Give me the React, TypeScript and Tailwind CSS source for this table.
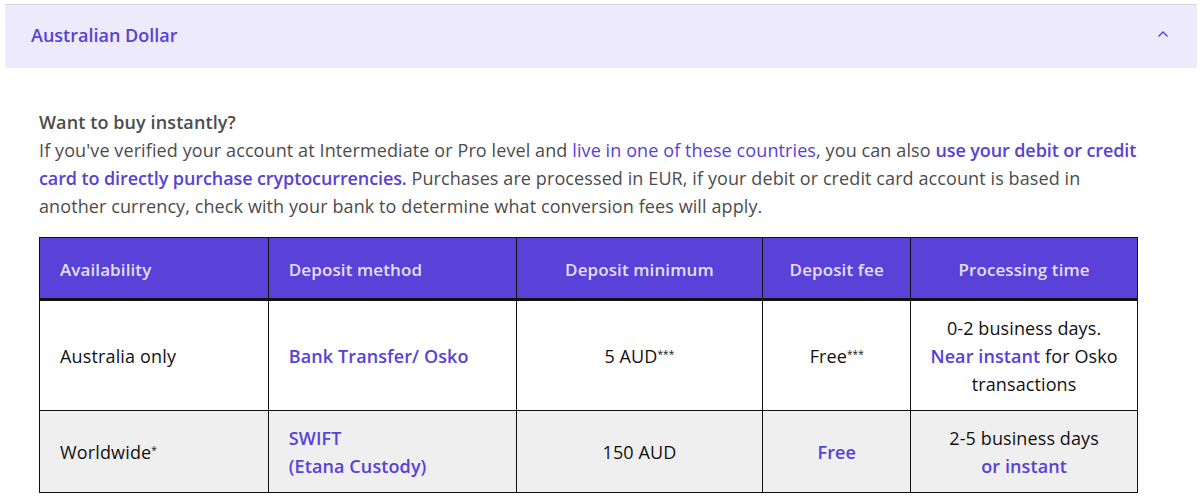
import React from "react";

const P = "text-[#5841d8]";

export default function App() {
  return (
    <div className="w-[1204px] h-[502px] bg-white overflow-hidden" style={{ fontFamily: "'Open Sans', 'Noto Sans', sans-serif" }}>
      <div className="h-[4px]" />
      <div className="mx-[5px] w-[1192px] border-t border-[#d6d6d6]">
        <div className="h-[63px] bg-[#edeafb] flex items-center justify-between pl-[26px] pr-[28px] pb-[3px]">
          <span className={`text-[18px] font-semibold ${P}`}>Australian Dollar</span>
          <svg width="12" height="8" viewBox="0 0 12 8" className="mt-[-2px]">
            <path d="M1.5 6.5 L6 2 L10.5 6.5" fill="none" stroke="#5841d8" strokeWidth="1.4" />
          </svg>
        </div>
      </div>
      <div className="ml-[39px] w-[1098px] pt-[40px] text-[18px] leading-[28px] tracking-[0.1px] text-[#4c4c4c]">
        <div className="font-semibold">Want to buy instantly?</div>
        <p className="w-[1110px]">
          If you've verified your account at Intermediate or Pro level and{" "}
          <span className={P}>live in one of these countries</span>, you can also{" "}
          <span className={`${P} font-semibold tracking-[-0.1px]`}>use your debit or credit card to directly purchase cryptocurrencies.</span>{" "}
          Purchases are processed in EUR, if your debit or credit card account is based in another currency, check with your bank to determine what conversion fees will apply.
        </p>
        <table className="mt-[17px] w-[1099px] border-collapse text-[18px] leading-[28px] text-[#111]">
          <colgroup>
            <col className="w-[229px]" />
            <col className="w-[248px]" />
            <col className="w-[247px]" />
            <col className="w-[148px]" />
            <col className="w-[227px]" />
          </colgroup>
          <thead>
            <tr className="h-[62px] bg-[#5a41d8] text-[#e3dff8] text-[17px] border-b-[3px] border-[#111]">
              <th className="border border-[#111] px-[20px] pt-[4px] text-left font-semibold">Availability</th>
              <th className="border border-[#111] px-[20px] pt-[4px] text-left font-semibold">Deposit method</th>
              <th className="border border-[#111] px-[20px] pt-[4px] text-center font-semibold">Deposit minimum</th>
              <th className="border border-[#111] px-[20px] pt-[4px] text-center font-semibold">Deposit fee</th>
              <th className="border border-[#111] px-[20px] pt-[4px] text-center font-semibold">Processing time</th>
            </tr>
          </thead>
          <tbody>
            <tr className="h-[111px] bg-white">
              <td className="border border-[#111] px-[20px] tracking-[0.15px]">Australia only</td>
              <td className={`border border-[#111] px-[20px] font-semibold ${P}`}>Bank Transfer/ Osko</td>
              <td className="border border-[#111] px-[20px] text-center">5 AUD<sup className="text-[10px]">***</sup></td>
              <td className="border border-[#111] px-[20px] text-center">Free<sup className="text-[10px]">***</sup></td>
              <td className="border border-[#111] px-[10px] text-center">
                0-2 business days.<br />
                <span className={`${P} font-semibold`}>Near instant</span> for Osko<br />
                transactions
              </td>
            </tr>
            <tr className="h-[82px] bg-[#efefef]">
              <td className="border border-[#111] px-[20px] tracking-[0.15px]">Worldwide<sup className="text-[10px]">*</sup></td>
              <td className={`border border-[#111] px-[20px] font-semibold ${P}`}>SWIFT<br />(Etana Custody)</td>
              <td className="border border-[#111] px-[20px] text-center">150 AUD</td>
              <td className={`border border-[#111] px-[20px] text-center font-semibold ${P}`}>Free</td>
              <td className="border border-[#111] px-[10px] text-center">
                2-5 business days<br />
                <span className={`${P} font-semibold`}>or instant</span>
              </td>
            </tr>
          </tbody>
        </table>
      </div>
    </div>
  );
}
